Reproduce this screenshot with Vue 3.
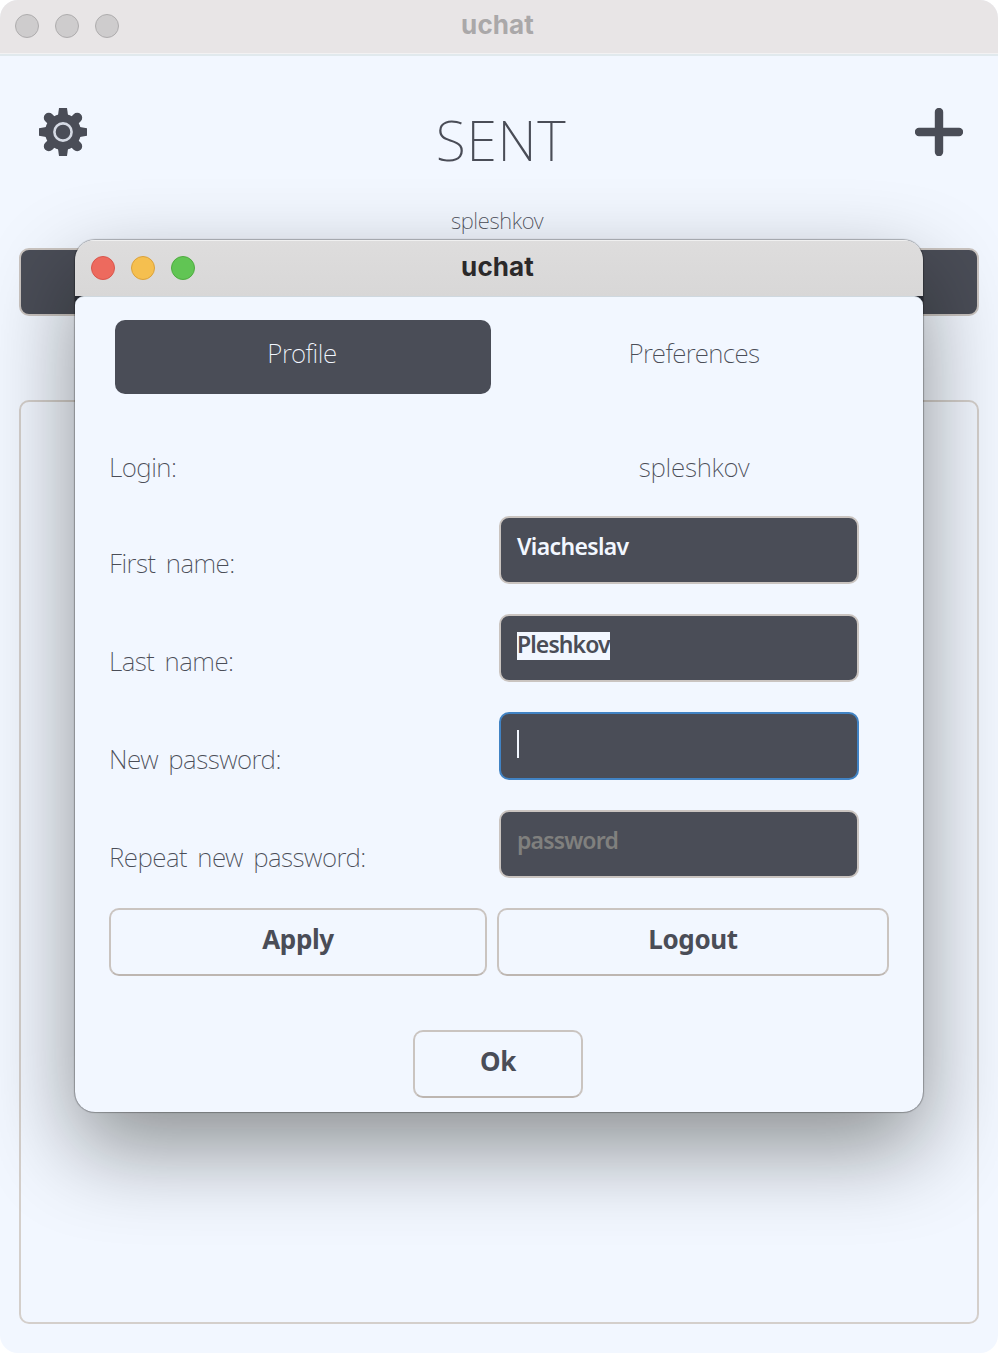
<script setup>
const fields = [
  { label: 'First name:', value: 'Viacheslav', kind: 'filled' },
  { label: 'Last name:', value: 'Pleshkov', kind: 'selected' },
  { label: 'New password:', value: '', kind: 'focused' },
  { label: 'Repeat new password:', value: 'password', kind: 'hint' },
]
</script>

<template>
  <div class="window">
    <header class="titlebar">
      <div class="lights"><i /><i /><i /></div>
      <span class="title">uchat</span>
    </header>
    <div class="top">
      <svg class="icon" width="48" height="48" viewBox="0 0 48 48">
        <g fill="#4a4d57">
          <circle cx="24" cy="24" r="18" />
          <path d="M18.6 10 L20 0 H28 L29.4 10 Z" />
          <path d="M18.6 38 L20 48 H28 L29.4 38 Z" />
          <path d="M10 18.6 L0 20.2 V27.8 L10 29.4 Z" />
          <path d="M38 18.6 L48 20.2 V27.8 L38 29.4 Z" />
        </g>
        <g stroke="#4a4d57" stroke-width="10" stroke-linecap="round">
          <path d="M9.8 9.8 L38.2 38.2 M38.2 9.8 L9.8 38.2" />
        </g>
        <circle cx="24" cy="24" r="8.6" fill="#4a4d57" stroke="#d5dae4" stroke-width="2.6" />
      </svg>
      <h1>SENT</h1>
      <svg class="icon" width="48" height="48" viewBox="0 0 48 48">
        <path d="M24 4 V44 M4 24 H44" stroke="#4a4d57" stroke-width="8.4" stroke-linecap="round" />
      </svg>
    </div>
    <div class="user">spleshkov</div>
    <div class="search" />
    <div class="list" />
  </div>

  <div class="dialog">
    <header class="dialog-bar">
      <div class="lights active"><i /><i /><i /></div>
      <span class="title">uchat</span>
    </header>
    <div class="seam">
      <div class="body">
        <nav class="tabs">
          <div class="tab on">Profile</div>
          <div class="tab">Preferences</div>
        </nav>
        <div class="login">
          <span class="label l-login">Login:</span>
          <span class="label l-user">spleshkov</span>
        </div>
        <div v-for="f in fields" :key="f.label" class="row">
          <span class="label">{{ f.label }}</span>
          <div class="field" :class="f.kind">
            <span v-if="f.value" class="value">{{ f.value }}</span>
            <i v-else class="caret" />
          </div>
        </div>
        <div class="actions">
          <div class="btn apply">Apply</div>
          <div class="btn logout">Logout</div>
        </div>
        <div class="btn ok">Ok</div>
      </div>
    </div>
  </div>
</template>

<style>
body { background: #fff; }
#app { position: relative; width: 998px; height: 1353px; overflow: hidden; }
</style>

<style scoped>
.window, .dialog { box-sizing: border-box; color: #4a4d57; font-family: "Noto Sans", "Open Sans", sans-serif; }
.window { display: flex; flex-direction: column; width: 998px; height: 1353px; background: #f2f7ff; border-radius: 18px; overflow: hidden; }
.titlebar, .dialog-bar { box-sizing: border-box; position: relative; display: flex; align-items: center; justify-content: center; flex: none; }
.titlebar { height: 56px; padding: 0 3px 5px 0; background: #e8e5e6; border-bottom: 2px solid #e1e9ed; box-shadow: inset 0 -1px #f3f2f3; }
.title { font: 700 26px/32px Inter, sans-serif; color: #aaa8a9; letter-spacing: .1px; }
.lights { position: absolute; left: 15px; top: 14px; display: flex; gap: 16px; }
.lights i { box-sizing: border-box; width: 24px; height: 24px; border-radius: 50%; background: #cecccd; border: 1px solid #aeacad; }
.top { display: flex; justify-content: space-between; align-items: flex-start; height: 96px; padding: 52px 35px 0 39px; }
.icon { display: block; }
h1 { margin: 0; font-weight: 200; font-size: 55px; line-height: 63px; letter-spacing: .7px; white-space: nowrap; }
.user { height: 44px; padding-right: 4px; text-align: center; font-weight: 200; font-size: 22px; line-height: 32px; letter-spacing: -.35px; }
.search { flex: none; box-sizing: border-box; width: 960px; height: 68px; margin: 0 19px; border: 2px solid #cac4c0; border-radius: 10px; background: #4a4d57; }
.list { flex: none; box-sizing: border-box; width: 960px; height: 924px; margin: 84px 19px 0; border: 2px solid #d4cfcb; border-radius: 10px; }

.dialog { position: absolute; left: 75px; top: 240px; width: 848px; height: 872px; border-radius: 20px; box-shadow: 0 0 1px 1px rgba(0, 0, 0, .28), 0 36px 88px rgba(8, 10, 0, .43); overflow: hidden; }
.dialog-bar { height: 56px; padding: 0 3px 2px 0; background: linear-gradient(#dedddd, #d8d7d7); box-shadow: inset 0 1px #f0f0f0; }
.dialog-bar .title { color: #2b292a; }
.dialog-bar .lights { left: 16px; top: 16px; }
.active i:nth-child(1) { background: #ed6a5e; border-color: #d8564c; }
.active i:nth-child(2) { background: #f5bf4f; border-color: #daa13b; }
.active i:nth-child(3) { background: #61c554; border-color: #4fab40; }
.seam { background: #252830; height: 816px; }
.body { box-sizing: border-box; height: 816px; padding: 23px 34px 0; background: #f2f7ff; border-radius: 9px 9px 0 0; border-top: 1px solid #cfd8df; }
.tabs { display: flex; gap: 16px; margin-left: 6px; }
.tab { box-sizing: border-box; width: 376px; height: 74px; padding-right: 2px; border-radius: 10px; text-align: center; font-weight: 200; font-size: 26px; line-height: 66px; letter-spacing: -.6px; }
.on { background: #4a4d57; color: #f2f7ff; letter-spacing: -.45px; }
.label { font-weight: 200; font-size: 26px; line-height: 36px; letter-spacing: -.5px; word-spacing: 4px; white-space: nowrap; }
.login { display: flex; height: 122px; box-sizing: border-box; padding-top: 55px; }
.l-login { width: 390px; }
.l-user { width: 390px; text-align: center; letter-spacing: -.25px; }
.row { display: flex; height: 98px; }
.row .label { width: 390px; padding-top: 29px; }
.field { box-sizing: border-box; display: flex; align-items: flex-start; width: 360px; height: 68px; padding: 14px 16px; border: 2px solid #cac4c0; border-radius: 10px; background: #4a4d57; color: #f2f7ff; font-weight: 650; font-size: 23px; letter-spacing: -.65px; }
.value { line-height: 28px; height: 28px; white-space: nowrap; }
.selected .value { margin-top: 2px; line-height: 24px; background: #f2f7ff; color: #4a4d57; letter-spacing: -.9px; }
.focused { border-color: #4183c4; }
.hint { color: #80807e; letter-spacing: -.85px; }
.caret { width: 2px; height: 28px; margin-top: 2px; background: #f2f7ff; }
.actions { display: flex; gap: 10px; }
.btn { box-sizing: border-box; height: 68px; border: 2px solid #cac4c0; border-bottom-color: #bdb6b1; border-radius: 10px; text-align: center; font-weight: 700; font-size: 26px; line-height: 58px; letter-spacing: -.4px; }
.apply { width: 378px; }
.logout { width: 392px; }
.ok { width: 170px; margin: 54px 0 0 304px; }
</style>
